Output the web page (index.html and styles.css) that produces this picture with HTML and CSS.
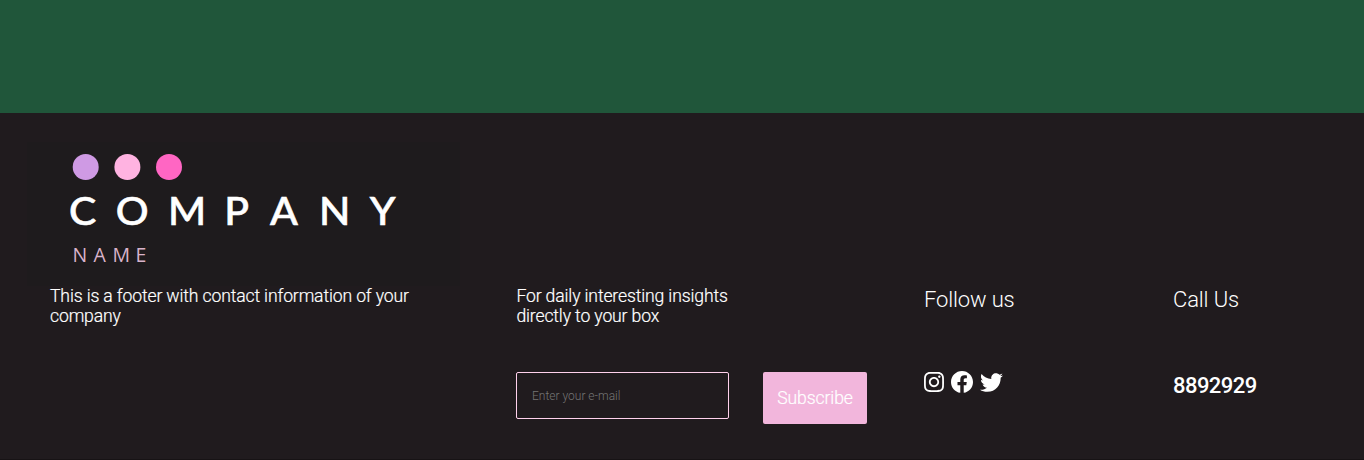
FILE: index.html
```html
<!DOCTYPE html>
<html lang="en">
<head>
<meta charset="utf-8">
<title>Company Name</title>
<link rel="stylesheet" href="styles.css">
</head>
<body>
<main class="section"></main>
<footer class="footer">
  <svg class="logo" viewBox="0 0 433 144" role="img" aria-label="Company Name">
    <rect width="433" height="144" fill="#1e1b1d"/>
    <circle cx="58.700" cy="25" r="13" fill="#cf9ae4"/>
    <circle cx="100.400" cy="25" r="13" fill="#ffb3e1"/>
    <circle cx="142" cy="25" r="13" fill="#ff66c3"/>
    <text class="logo-company" transform="scale(1.05 1)" y="83.500" x="40 84.600 134.200 187.800 231.500 278 326.500">COMPANY</text>
    <text class="logo-name" y="120" x="45.500 66.500 85.500 108.500">NAME</text>
  </svg>
  <div class="columns">
    <p class="about">This is a footer with contact information of your company</p>
    <div class="newsletter">
      <p class="lead">For daily interesting insights directly to your box</p>
      <form class="form">
        <input class="email" type="email" placeholder="Enter your e-mail">
        <button class="subscribe" type="button">Subscribe</button>
      </form>
    </div>
    <div class="follow">
      <h2 class="title">Follow us</h2>
      <div class="icons">
        <svg class="instagram" viewBox="0 31 448 449"><path d="M224.100 141c-63.600 0-114.900 51.300-114.900 114.900s51.300 114.900 114.900 114.900S339 319.500 339 255.900 287.700 141 224.100 141zm0 189.600c-41.100 0-74.700-33.500-74.700-74.700s33.500-74.700 74.700-74.700 74.700 33.500 74.700 74.700-33.600 74.700-74.700 74.700zm146.400-194.300c0 14.900-12 26.800-26.800 26.800-14.900 0-26.800-12-26.800-26.800s12-26.800 26.800-26.800 26.800 12 26.800 26.800zm76.100 27.200c-1.700-35.900-9.900-67.700-36.200-93.900-26.200-26.200-58-34.400-93.900-36.200-37-2.100-147.900-2.100-184.900 0-35.800 1.700-67.600 9.900-93.900 36.100s-34.400 58-36.200 93.900c-2.100 37-2.100 147.900 0 184.900 1.700 35.900 9.900 67.700 36.200 93.900s58 34.400 93.900 36.200c37 2.100 147.900 2.100 184.900 0 35.900-1.700 67.700-9.900 93.900-36.200 26.200-26.200 34.400-58 36.200-93.900 2.100-37 2.100-147.800 0-184.800zM398.800 388c-7.800 19.600-22.900 34.700-42.600 42.600-29.500 11.700-99.500 9-132.100 9s-102.700 2.600-132.100-9c-19.600-7.800-34.700-22.900-42.600-42.600-11.700-29.500-9-99.500-9-132.100s-2.600-102.700 9-132.100c7.800-19.600 22.900-34.700 42.600-42.600 29.500-11.700 99.500-9 132.100-9s102.700-2.600 132.100 9c19.600 7.800 34.700 22.900 42.600 42.600 11.700 29.500 9 99.500 9 132.100s2.700 102.700-9 132.100z"/></svg>
        <svg class="facebook" viewBox="8 8 496 496"><path d="M504 256C504 119 393 8 256 8S8 119 8 256c0 123.780 90.690 226.380 209.250 245V327.690h-63V256h63v-54.640c0-62.150 37-96.480 93.670-96.480 27.140 0 55.520 4.840 55.520 4.840v61h-31.280c-30.800 0-40.410 19.120-40.410 38.730V256h68.780l-11 71.690h-57.780V501C413.310 482.380 504 379.780 504 256z"/></svg>
        <svg class="twitter" viewBox="0 48 512 416"><path d="M459.370 151.716c.325 4.548.325 9.097.325 13.645 0 138.720-105.583 298.558-298.558 298.558-59.452 0-114.680-17.219-161.137-47.106 8.447.974 16.568 1.299 25.340 1.299 49.055 0 94.213-16.568 130.274-44.832-46.132-.975-84.792-31.188-98.112-72.772 6.498.974 12.995 1.624 19.818 1.624 9.421 0 18.843-1.300 27.614-3.573-48.081-9.747-84.143-51.980-84.143-102.985v-1.299c13.969 7.797 30.214 12.670 47.431 13.319-28.264-18.843-46.781-51.005-46.781-87.391 0-19.492 5.197-37.360 14.294-52.954 51.655 63.675 129.300 105.258 216.365 109.807-1.624-7.797-2.599-15.918-2.599-24.040 0-57.828 46.782-104.934 104.934-104.934 30.213 0 57.502 12.670 76.670 33.137 23.715-4.548 46.456-13.320 66.599-25.340-7.798 24.366-24.366 44.833-46.132 57.827 21.117-2.273 41.584-8.122 60.426-16.243-14.292 20.791-32.161 39.308-52.628 54.253z"/></svg>
      </div>
    </div>
    <div class="call">
      <h2 class="title">Call Us</h2>
      <p class="phone">8892929</p>
    </div>
  </div>
</footer>
</body>
</html>
```
FILE: styles.css
```css
* { box-sizing: border-box; }
body { margin: 0; font-family: Roboto, sans-serif; font-weight: 300; color: #fff; background: #171315; }
.section { height: 113px; background: #20563a; }
.footer { height: 346px; padding: 29px 0 0 27px; background: #201b1e; }
.logo { display: block; width: 433px; height: 144px; }
.logo-company { font: 500 39px Lato, sans-serif; fill: #fff; stroke: #fff; stroke-width: .6px; }
.logo-name { font: 400 19.500px "Open Sans", sans-serif; fill: #d9b3cb; }
.columns { display: grid; grid-template-columns: 466px 408px 249px 1fr; padding-left: 23px; }
.about, .lead { margin: 0; font-size: 17.600px; line-height: 20px; letter-spacing: -.14px; -webkit-text-stroke: .2px #fff; }
.about { width: 380px; }
.lead { width: 240px; padding-left: .4px; }
.form { display: flex; align-items: flex-start; gap: 34px; margin: 46px 0 0; }
.email { width: 213px; height: 47px; padding: 0 15px; border: 1px solid #ffd1ec; border-radius: 2px; background: transparent; color: #fff; font: 300 12px Roboto, sans-serif; }
.email::placeholder { color: #757575; }
.subscribe { width: 104px; height: 52px; padding: 0; border: 0; border-radius: 2px; background: #f2b6dc; color: #fff; font: 300 17.600px Roboto, sans-serif; letter-spacing: -.1px; -webkit-text-stroke: .2px #fff; }
.title { margin: 0; padding-top: 1px; font-size: 22px; line-height: 26px; font-weight: 300; letter-spacing: -.14px; }
.icons { display: flex; align-items: center; gap: 7px; height: 22px; margin-top: 58px; fill: #fff; }
.instagram { width: 20px; height: 20px; }
.facebook { width: 22px; height: 22px; }
.twitter { width: 23px; height: 19px; }
.phone { margin: 60px 0 0; font-size: 22px; line-height: 26px; font-weight: 500; letter-spacing: -.55px; }
```
